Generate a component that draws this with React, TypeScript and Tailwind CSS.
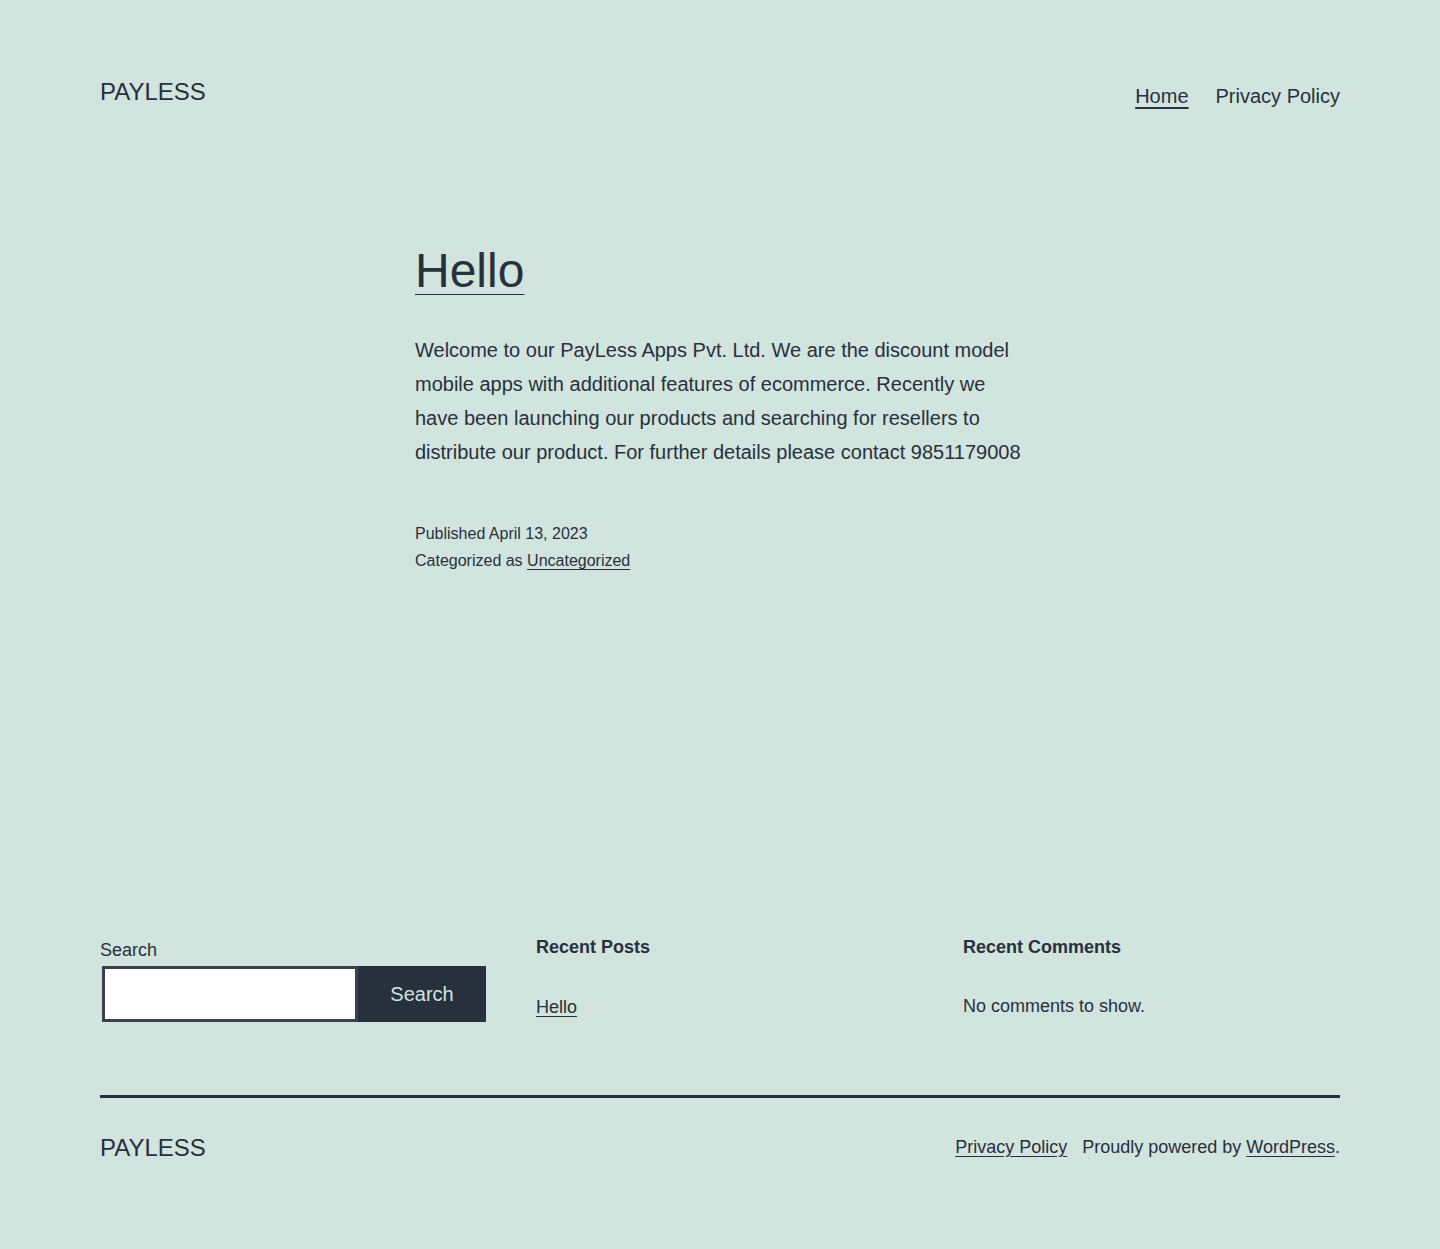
import React from 'react';

const font = { fontFamily: '"Liberation Sans", Arial, sans-serif' };

const Header = () => (
  <header className="flex justify-between items-start pt-[76px]">
    <a href="#" className="text-[24px] leading-[31px] uppercase">
      Payless
    </a>
    <nav className="flex items-center gap-[27px] pt-[5px] text-[20px] leading-[30px]">
      <a href="#" className="underline decoration-2 underline-offset-[4px]">
        Home
      </a>
      <a href="#">Privacy Policy</a>
    </nav>
  </header>
);

const Post = () => (
  <article className="w-[610px] mx-auto mt-[129px]">
    <h2 className="text-[48px] leading-[62px]">
      <a href="#" className="underline decoration-1 underline-offset-[7px]">
        Hello
      </a>
    </h2>
    <p className="mt-[31px] text-[20px] leading-[34px]">
      Welcome to our PayLess Apps Pvt. Ltd. We are the discount model mobile apps with additional
      features of ecommerce. Recently we have been launching our products and searching for resellers
      to distribute our product. For further details please contact 9851179008
    </p>
    <div className="mt-[51px] text-[16px] leading-[27px]">
      <div>Published April 13, 2023</div>
      <div>
        Categorized as{' '}
        <a href="#" className="underline underline-offset-[3px]">
          Uncategorized
        </a>
      </div>
    </div>
  </article>
);

const Widgets = () => (
  <div className="grid grid-cols-[386px_1fr_1fr] gap-x-[50px] items-start mt-[360px]">
    {/* Search */}
    <div className="pt-[3px]">
      <label className="block text-[18px] leading-[27px] mb-[2px]">Search</label>
      <div className="flex">
        <input
          type="text"
          className="ml-[2px] w-[256px] h-[56px] bg-white border-[3px] border-[#39414d] outline-none"
        />
        <button className="w-[128px] h-[56px] bg-[#28303d] text-[#d1e4dd] text-[20px]">Search</button>
      </div>
    </div>

    {/* Recent posts */}
    <div className="pt-[1px]">
      <h2 className="text-[18px] leading-[24px] font-bold">Recent Posts</h2>
      <ul className="mt-[35px] text-[18px] leading-[27px]">
        <li>
          <a href="#" className="underline underline-offset-[3px]">
            Hello
          </a>
        </li>
      </ul>
    </div>

    {/* Recent comments */}
    <div className="pt-[1px]">
      <h2 className="text-[18px] leading-[24px] font-bold">Recent Comments</h2>
      <p className="mt-[34px] text-[18px] leading-[27px]">No comments to show.</p>
    </div>
  </div>
);

const Footer = () => (
  <footer className="mt-[73px] border-t-[3px] border-[#28303d] pt-[34px] pb-[85px] flex justify-between items-center">
    <a href="#" className="text-[24px] leading-[31px] uppercase">
      Payless
    </a>
    <div className="flex items-center gap-[15px] text-[18px] leading-[27px]">
      <a href="#" className="underline underline-offset-[3px]">
        Privacy Policy
      </a>
      <span>
        Proudly powered by{' '}
        <a href="#" className="underline underline-offset-[3px]">
          WordPress
        </a>
        .
      </span>
    </div>
  </footer>
);

export default function App() {
  return (
    <div className="min-h-screen bg-[#d1e4dd] text-[#28303d] px-[100px]" style={font}>
      <Header />
      <Post />
      <Widgets />
      <Footer />
    </div>
  );
}
